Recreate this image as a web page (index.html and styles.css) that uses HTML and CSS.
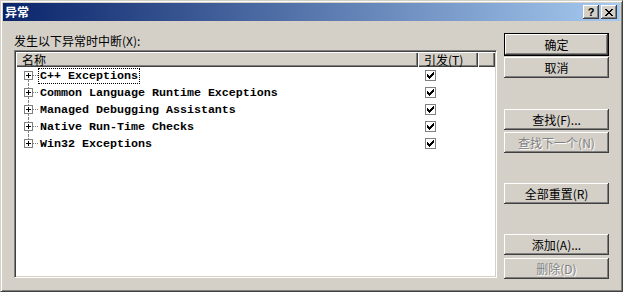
FILE: index.html
```html
<!DOCTYPE html>
<html lang="zh-CN">

<head>
    <meta charset="utf-8">
    <title>异常</title>
    <link rel="stylesheet" href="styles.css">
</head>

<body>
    <div class="window">
        <div class="titlebar">
            <span class="title">异常</span>
            <div class="caption">
                <button class="cap help">?</button>
                <button class="cap close">
                    <svg width="8" height="7" viewBox="0 0 8 7" shape-rendering="crispEdges">
                        <path d="M0 0h2v1H0zM6 0h2v1H6zM1 1h2v1H1zM5 1h2v1H5zM2 2h4v1H2zM3 3h2v1H3zM2 4h4v1H2zM1 5h2v1H1zM5 5h2v1H5zM0 6h2v1H0zM6 6h2v1H6z" fill="#000"/>
                    </svg>
                </button>
            </div>
        </div>

        <div class="content">
            <div class="left">
                <div class="prompt">发生以下异常时中断(X):</div>
                <div class="listview">
                    <div class="lv-header">
                        <div class="hcol hname">名称</div>
                        <div class="hcol hbreak">引发(T)</div>
                        <div class="hcol hrest"></div>
                    </div>
                    <ul class="tree" id="tree"></ul>
                </div>
            </div>

            <div class="buttons">
                <button class="btn default">确定</button>
                <button class="btn cancel">取消</button>
                <button class="btn find">查找(F)...</button>
                <button class="btn findnext" disabled>查找下一个(N)</button>
                <button class="btn reset">全部重置(R)</button>
                <button class="btn add">添加(A)...</button>
                <button class="btn remove" disabled>删除(D)</button>
            </div>
        </div>
    </div>

    <script>
        let kategorier = [
            "C++ Exceptions",
            "Common Language Runtime Exceptions",
            "Managed Debugging Assistants",
            "Native Run-Time Checks",
            "Win32 Exceptions"
        ];

        let dest = document.querySelector("#tree");

        kategorier.forEach((navn, i) => {
            let template = `<li class="node">
                <div class="namecell">
                    <span class="expander">
                        <svg width="9" height="9" viewBox="0 0 9 9" shape-rendering="crispEdges">
                            <rect x="0.5" y="0.5" width="8" height="8" fill="#fff" stroke="#808080"/>
                            <path d="M2 4h5v1H2zM4 2h1v5H4z" fill="#000"/>
                        </svg>
                    </span>
                    <span class="connector"></span>
                    <span class="label ${i == 0 ? "focus" : ""}">${navn}</span>
                </div>
                <div class="checkcell">
                    <svg width="11" height="11" viewBox="0 0 11 11" shape-rendering="crispEdges">
                        <rect x="0.5" y="0.5" width="10" height="10" fill="#fff" stroke="#808080"/>
                        <path d="M2 4h1v3H2zM3 5h1v3H3zM4 6h1v3H4zM5 5h1v3H5zM6 4h1v3H6zM7 3h1v3H7zM8 2h1v3H8z" fill="#000"/>
                    </svg>
                </div>
            </li>`;
            dest.insertAdjacentHTML("beforeend", template);
        });
    </script>
</body>

</html>
```

FILE: styles.css
```css
html, body {
    margin: 0;
    padding: 0;
    background: #d4d0c8;
}

.window {
    width: 623px;
    height: 292px;
    box-sizing: border-box;
    border: 1px solid;
    border-color: #d4d0c8 #404040 #404040 #d4d0c8;
    box-shadow: inset 1px 1px #ffffff, inset -1px -1px #808080;
    padding: 2px;
    display: flex;
    flex-direction: column;
    background: #d4d0c8;
    font-family: "Noto Sans CJK SC", "Liberation Sans", sans-serif;
    font-size: 12px;
    color: #000;
}

.titlebar {
    height: 18px;
    display: flex;
    align-items: center;
    padding: 0 3px 0 2px;
    background: linear-gradient(to right, #0a246a, #a6caf0);
}

.title {
    color: #fff;
    font-weight: bold;
    font-size: 12px;
    line-height: 14px;
}

.caption {
    margin-left: auto;
    display: flex;
    gap: 2px;
}

.cap {
    width: 16px;
    height: 14px;
    padding: 0;
    border: none;
    background: #d4d0c8;
    box-shadow: inset -1px -1px #404040, inset 1px 1px #ffffff, inset -2px -2px #808080, inset 2px 2px #d4d0c8;
    display: flex;
    align-items: center;
    justify-content: center;
}

.help {
    font-family: "Liberation Sans", sans-serif;
    font-weight: bold;
    font-size: 11px;
    line-height: 12px;
    color: #000;
}

.content {
    flex: 1;
    display: flex;
    gap: 7px;
    padding: 12px 11px 0 11px;
}

.left {
    width: 483px;
    display: flex;
    flex-direction: column;
}

.prompt {
    line-height: 15px;
    height: 15px;
    margin-bottom: 2px;
    white-space: nowrap;
}

.listview {
    height: 228px;
    box-sizing: border-box;
    border: 1px solid;
    border-color: #808080 #ffffff #ffffff #808080;
    box-shadow: inset 1px 1px #404040, inset -1px -1px #d4d0c8;
    padding: 1px;
    background: #fff;
    display: flex;
    flex-direction: column;
}

.lv-header {
    display: flex;
    height: 15px;
    flex-shrink: 0;
}

.hcol {
    box-sizing: border-box;
    height: 15px;
    line-height: 15px;
    padding-left: 6px;
    background: #d4d0c8;
    box-shadow: inset 1px 1px #ffffff, inset -1px -1px #404040, inset -2px -2px #808080;
    white-space: nowrap;
}

.hname {
    width: 402px;
}

.hbreak {
    width: 60px;
}

.hrest {
    flex: 1;
}

.tree {
    list-style: none;
    margin: 0;
    padding: 0;
}

.node {
    display: flex;
    height: 17px;
}

.namecell {
    width: 402px;
    display: flex;
    align-items: center;
    padding-left: 8px;
    box-sizing: border-box;
}

.expander {
    width: 9px;
    height: 17px;
    display: flex;
    flex-direction: column;
}

.expander::before,
.expander::after {
    content: "";
    flex: 1;
    margin-left: 4px;
    border-left: 1px dotted #808080;
}

.node:first-child .expander::before,
.node:last-child .expander::after {
    border-left-color: transparent;
}

.expander svg {
    display: block;
    flex-shrink: 0;
}

.connector {
    width: 5px;
    height: 0;
    border-top: 1px dotted #808080;
}

.label {
    font-family: "Liberation Mono", "DejaVu Sans Mono", monospace;
    font-weight: bold;
    font-size: 11.67px;
    line-height: 13px;
    padding: 1px 1px 0 1px;
    border: 1px solid transparent;
    white-space: nowrap;
}

.label.focus {
    border: 1px dotted #000;
}

.checkcell {
    width: 60px;
    display: flex;
    align-items: center;
    padding-left: 7px;
    box-sizing: border-box;
}

.checkcell svg {
    display: block;
}

.buttons {
    width: 105px;
    display: flex;
    flex-direction: column;
}

.btn {
    width: 105px;
    height: 21px;
    padding: 0;
    border: none;
    background: #d4d0c8;
    box-shadow: inset -1px -1px #404040, inset 1px 1px #ffffff, inset -2px -2px #808080, inset 2px 2px #d4d0c8;
    font-family: "Noto Sans CJK SC", "Liberation Sans", sans-serif;
    font-size: 12px;
    line-height: 14px;
    color: #000;
    flex-shrink: 0;
}

.btn:disabled {
    color: #808080;
    text-shadow: 1px 1px #ffffff;
}

.default {
    height: 23px;
    border: 1px solid #000;
}

.cancel {
    margin-top: 1px;
}

.find {
    margin-top: 31px;
}

.findnext {
    margin-top: 2px;
}

.reset {
    margin-top: 30px;
}

.add {
    margin-top: 30px;
}

.remove {
    margin-top: 3px;
}
```
